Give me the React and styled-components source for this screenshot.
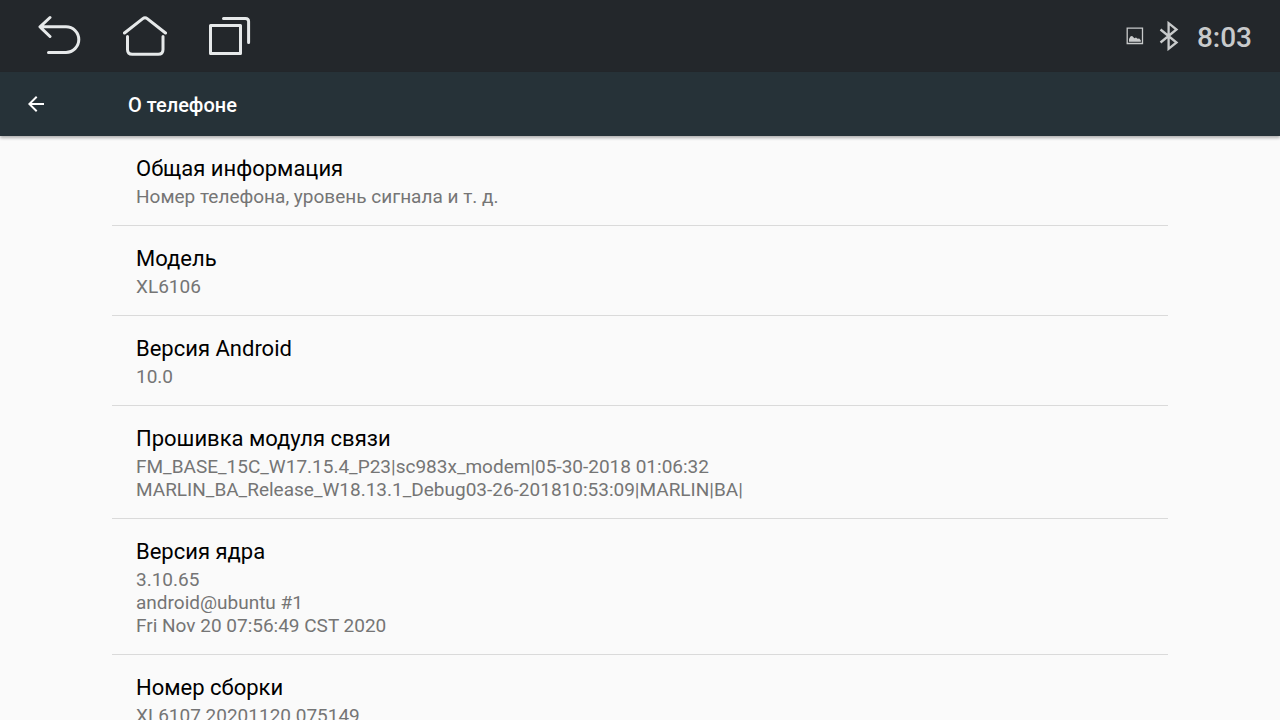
import styled, { createGlobalStyle } from "styled-components";

const ITEMS = [
  {
    title: "Общая информация",
    lines: ["Номер телефона, уровень сигнала и т. д."],
  },
  { title: "Модель", lines: ["XL6106"] },
  { title: "Версия Android", lines: ["10.0"] },
  {
    title: "Прошивка модуля связи",
    lines: [
      "FM_BASE_15C_W17.15.4_P23|sc983x_modem|05-30-2018 01:06:32",
      "MARLIN_BA_Release_W18.13.1_Debug03-26-201810:53:09|MARLIN|BA|",
    ],
  },
  {
    title: "Версия ядра",
    lines: ["3.10.65", "android@ubuntu #1", "Fri Nov 20 07:56:49 CST 2020"],
  },
  { title: "Номер сборки", lines: ["XL6107 20201120 075149"] },
];

const BackIcon = () => (
  <NavIcon viewBox="0 0 44 44" aria-hidden="true">
    <path d="M12 3.5 2 12.8 12 22.5M2 12.8h26a12.8 12.8 0 0 1 0 25.6H10.5" />
  </NavIcon>
);

const HomeIcon = () => (
  <NavIcon viewBox="0 0 44 44" aria-hidden="true">
    <path d="M1.5 19 19.8 4.6Q22 2.8 24.2 4.6L42.5 19" />
    <path d="M4.5 22.5V35.5Q4.5 40.3 9.3 40.3H35.2Q40 40.3 40 35.5V22.5" />
  </NavIcon>
);

const RecentsIcon = () => (
  <NavIcon viewBox="0 0 44 44" aria-hidden="true">
    <path d="M2.5 11.5H32.5V39.5H2.5Z" />
    <path d="M15.5 4.5H37.5Q40.6 4.5 40.6 7.6V28.5" />
  </NavIcon>
);

const ArrowIcon = () => (
  <SmallArrow viewBox="0 0 24 24" aria-hidden="true">
    <path d="M20 11H7.8l5.6-5.6L12 4l-8 8 8 8 1.4-1.4L7.8 13H20z" />
  </SmallArrow>
);

const PictureIcon = () => (
  <svg width="18" height="18" viewBox="0 0 18 18" aria-hidden="true">
    <path
      d="M1.2 1.2H16.5V16.5H1.2Z"
      fill="none"
      stroke="#c8cacb"
      strokeWidth="1.3"
    />
    <path
      d="M3 14.8V12l1.4-2.6q1.8-1 2.8.6l1.2 1.2 1.6-.8 1.6 1.4 1.6-.2 1.6 1.6v1.6z"
      fill="#c8cacb"
    />
  </svg>
);

const BluetoothIcon = () => (
  <svg width="20" height="30" viewBox="0 0 20 30" aria-hidden="true">
    <path
      d="M1.5 8.5 17.5 21.5 9.6 27.8V2.2L17.5 8.5 1.5 21.5"
      fill="none"
      stroke="#c8cacb"
      strokeWidth="2.3"
    />
  </svg>
);

const App = () => {
  return (
    <>
      <GlobalStyle />
      <Screen>
        <SystemBar>
          <NavButtons>
            <NavButton type="button" aria-label="Назад">
              <BackIcon />
            </NavButton>
            <NavButton type="button" aria-label="Домой">
              <HomeIcon />
            </NavButton>
            <NavButton type="button" aria-label="Недавние">
              <RecentsIcon />
            </NavButton>
          </NavButtons>
          <Status>
            <PictureIcon />
            <BluetoothIcon />
            <Clock>8:03</Clock>
          </Status>
        </SystemBar>
        <AppBar>
          <UpButton type="button" aria-label="Вверх">
            <ArrowIcon />
          </UpButton>
          <Heading>О телефоне</Heading>
        </AppBar>
        <Content>
          <List>
            {ITEMS.map(({ title, lines }) => (
              <Item key={title}>
                <ItemTitle>{title}</ItemTitle>
                {lines.map((line) => (
                  <Summary key={line}>{line}</Summary>
                ))}
              </Item>
            ))}
          </List>
        </Content>
      </Screen>
    </>
  );
};
export default App;

const GlobalStyle = createGlobalStyle`
  * {
    box-sizing: border-box;
  }
  body {
    margin: 0;
    background: #fafafa;
    font-family: Roboto, "Noto Sans", sans-serif;
  }
`;
const Screen = styled.div`
  display: flex;
  flex-direction: column;
  height: 100vh;
`;
const SystemBar = styled.div`
  display: flex;
  flex: none;
  justify-content: space-between;
  align-items: center;
  height: 72px;
  padding: 0 28px 0 38px;
  background: #23272b;
`;
const NavButtons = styled.nav`
  display: flex;
  gap: 41px;
`;
const NavButton = styled.button`
  display: flex;
  padding: 0;
  border: 0;
  background: none;
  cursor: pointer;
`;
const NavIcon = styled.svg`
  width: 44px;
  height: 44px;
  fill: none;
  stroke: #e6e9ea;
  stroke-width: 3;
  stroke-linecap: round;
  stroke-linejoin: round;
`;
const Status = styled.div`
  display: flex;
  align-items: center;
  gap: 15px;
`;
const Clock = styled.time`
  padding: 4px 0 0 3px;
  color: #c8cacb;
  font-size: 28px;
  font-weight: 500;
  line-height: 32px;
`;
const AppBar = styled.header`
  display: flex;
  flex: none;
  align-items: center;
  height: 64px;
  padding-left: 24px;
  background: #263238;
  box-shadow: 0 2px 3px rgba(0, 0, 0, 0.3);
  z-index: 1;
`;
const UpButton = styled.button`
  display: flex;
  width: 104px;
  padding: 0;
  border: 0;
  background: none;
  cursor: pointer;
`;
const SmallArrow = styled.svg`
  width: 24px;
  height: 24px;
  fill: #fff;
`;
const Heading = styled.h1`
  margin: 0;
  padding-top: 2px;
  color: #fff;
  font-size: 20px;
  font-weight: 500;
  line-height: 24px;
`;
const Content = styled.main`
  flex: 1;
  min-height: 0;
  padding: 0 112px;
  overflow-y: auto;
  scrollbar-width: none;
`;
const List = styled.ul`
  margin: 0;
  padding: 0;
  list-style: none;
`;
const Item = styled.li`
  padding: 18px 24px 17px;
  border-bottom: 1px solid #dadada;
`;
const ItemTitle = styled.h2`
  margin: 0 0 1px;
  color: #000;
  font-size: 22px;
  font-weight: 400;
  line-height: 30px;
`;
const Summary = styled.p`
  margin: 0;
  color: #757575;
  font-size: 19px;
  line-height: 23px;
`;
